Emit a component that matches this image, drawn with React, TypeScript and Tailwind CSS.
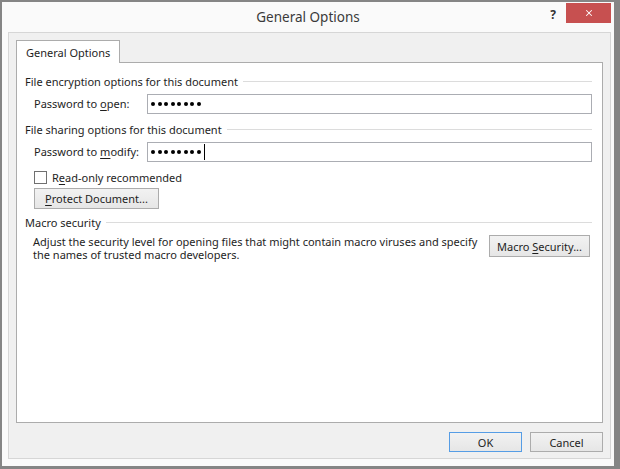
import { X } from 'lucide-react';

function Dots() {
    return (
        <div className="flex items-center gap-[2.5px]" aria-hidden="true">
            {[0, 1, 2, 3, 4, 5, 6, 7].map((i) => (
                <span key={i} className="w-[4px] h-[4px] rounded-full bg-black" />
            ))}
        </div>
    );
}

function SectionHeader({ title }: { title: string }) {
    return (
        <div className="flex items-center h-[16px]">
            <span className="whitespace-nowrap">{title}</span>
            <div className="flex-1 h-px bg-[#dcdcdc] ml-[5px]" />
        </div>
    );
}

function Button({ children, className = '' }: { children: React.ReactNode; className?: string }) {
    return (
        <button className={`flex items-center justify-center border bg-gradient-to-b from-[#f2f2f2] to-[#e6e6e6] ${className}`}>
            {children}
        </button>
    );
}

export default function App() {
    return (
        <div className="w-[620px] h-[469px] bg-[#858585] pt-[2px] pl-[2px] pr-[6px] pb-[3px] font-['Noto_Sans',sans-serif] text-[11px] leading-[15px] text-[#1e1e1e]">
            <div className="h-full bg-[#fafafa] flex flex-col">
                {/* Title bar */}
                <div className="h-[30px] grid grid-cols-[1fr_auto_1fr]">
                    <div />
                    <div className="flex items-center text-[13.5px] text-[#3a3a3a]">General Options</div>
                    <div className="flex items-start justify-end pt-[1px] pr-[3px]">
                        <span className="mt-[5px] mr-[10px] text-[12px] leading-[14px] font-bold text-[#333]">?</span>
                        <button className="w-[45px] h-[20px] bg-[#c75050] flex items-center justify-center">
                            <X className="w-[10px] h-[10px] text-white" strokeWidth={2.5} />
                        </button>
                    </div>
                </div>

                {/* Content area */}
                <div className="flex-1 ml-[6px] mr-[3px] mb-[7px] border border-[#d6d6d6] bg-[#f0f0f0] flex flex-col pt-[7px] px-[7px] pb-[6px]">
                    {/* Tabs */}
                    <div className="flex">
                        <div className="relative z-10 h-[23px] mb-[-1px] px-[9px] flex items-center bg-white border border-b-0 border-[#acacac]">
                            General Options
                        </div>
                    </div>

                    {/* Panel */}
                    <div className="flex-1 bg-white border border-[#acacac] pt-[10px] pl-[8px] pr-[10px] flex flex-col">
                        <SectionHeader title="File encryption options for this document" />
                        <div className="flex items-center mt-[5px] pl-[9px]">
                            <span className="w-[113px] pb-[2px]">
                                Password to <u className="underline-offset-2">o</u>pen:
                            </span>
                            <div className="flex-1 h-[20px] border border-[#abadb3] flex items-center pl-[3px]">
                                <Dots />
                            </div>
                        </div>

                        <div className="mt-[7px]">
                            <SectionHeader title="File sharing options for this document" />
                        </div>
                        <div className="flex items-center mt-[5px] pl-[9px]">
                            <span className="w-[113px] pb-[2px]">
                                Password to <u className="underline-offset-2">m</u>odify:
                            </span>
                            <div className="flex-1 h-[20px] border border-[#abadb3] flex items-center pl-[3px]">
                                <Dots />
                                <span className="ml-[3px] w-px h-[16px] bg-black" />
                            </div>
                        </div>

                        <div className="flex items-center mt-[9px] pl-[9px] h-[13px]">
                            <span className="w-[13px] h-[13px] border border-[#707070] bg-white" />
                            <span className="ml-[5px]">
                                R<u className="underline-offset-2">e</u>ad-only recommended
                            </span>
                        </div>

                        <div className="mt-[4px] pl-[9px] flex">
                            <Button className="w-[125px] h-[21px] border-[#acacac]">
                                <span>
                                    <u className="underline-offset-2">P</u>rotect Document...
                                </span>
                            </Button>
                        </div>

                        <div className="mt-[5px]">
                            <SectionHeader title="Macro security" />
                        </div>
                        <div className="mt-[5px] pl-[8px] pr-[2px] flex items-start justify-between">
                            <p className="leading-[13px] whitespace-nowrap">
                                Adjust the security level for opening files that might contain macro viruses and specify
                                <br />
                                the names of trusted macro developers.
                            </p>
                            <Button className="w-[101px] h-[22px] border-[#acacac]">
                                <span>
                                    Macro <u className="underline-offset-2">S</u>ecurity...
                                </span>
                            </Button>
                        </div>
                    </div>

                    {/* Dialog buttons */}
                    <div className="flex justify-end gap-[8px] mt-[9px]">
                        <Button className="w-[73px] h-[20px] border-[#569de5]">OK</Button>
                        <Button className="w-[73px] h-[20px] border-[#acacac]">Cancel</Button>
                    </div>
                </div>
            </div>
        </div>
    );
}
